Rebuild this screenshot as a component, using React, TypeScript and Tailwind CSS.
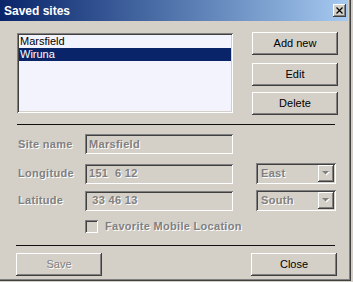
import React from "react";

const raised =
  "bg-[#d4d0c8] shadow-[inset_-1px_-1px_#404040,inset_1px_1px_#ffffff,inset_-2px_-2px_#808080]";
const sunken =
  "shadow-[inset_1px_1px_#808080,inset_-1px_-1px_#ffffff,inset_2px_2px_#404040,inset_-2px_-2px_#d4d0c8]";
const dimText = "text-[#808080] font-bold tracking-[0.3px] [text-shadow:1px_1px_0_#ffffff]";

function Field({ label, value }: { label: string; value: string }) {
  return (
    <div className="flex items-center h-[20px]">
      <span className={`w-[85px] pl-[18px] ${dimText}`}>{label}</span>
      <div className={`w-[148px] h-[20px] bg-[#d4d0c8] ${sunken} flex items-center pl-[4px]`}>
        <span className={`whitespace-pre ${dimText}`}>{value}</span>
      </div>
    </div>
  );
}

function Combo({ value }: { value: string }) {
  return (
    <div className={`ml-[23px] w-[80px] h-[21px] bg-[#d4d0c8] ${sunken} flex items-center p-[2px]`}>
      <span className={`flex-1 pl-[3px] ${dimText}`}>{value}</span>
      <div className={`w-[16px] h-[17px] ${raised} flex items-center justify-center`}>
        <svg width="8" height="5" viewBox="0 0 8 5">
          <path d="M1 1h7L4.5 4.5z" fill="#ffffff" />
          <path d="M0 0h7L3.5 3.5z" fill="#808080" />
        </svg>
      </div>
    </div>
  );
}

function Button({ label, disabled, className = "" }: { label: string; disabled?: boolean; className?: string }) {
  return (
    <div className={`w-[86px] h-[23px] ${raised} flex items-center justify-center ${className}`}>
      <span className={disabled ? "text-[#808080] [text-shadow:1px_1px_0_#ffffff]" : "text-black"}>{label}</span>
    </div>
  );
}

export default function App() {
  return (
    <div className="w-[353px] h-[282px] bg-[#d4d0c8] font-['Liberation_Sans',Arial,sans-serif] text-[11px] leading-none select-none">
      <div className="w-[351px] h-[281px] flex flex-col border-r border-b border-[#404040] shadow-[inset_-1px_-1px_#808080]">
        {/* Title bar */}
        <div className="h-[21px] mr-[2px] flex items-center justify-between bg-gradient-to-r from-[#0a246a] to-[#a6caf0] pl-[4px] pr-[2px]">
          <span className="text-white font-bold text-[12px]">Saved sites</span>
          <div className={`w-[13px] h-[13px] ${raised} flex items-center justify-center`}>
            <svg width="7" height="7" viewBox="0 0 7 7">
              <path d="M0.5 0.5l6 6M6.5 0.5l-6 6" stroke="#000" strokeWidth="1.2" />
            </svg>
          </div>
        </div>

        {/* List + actions */}
        <div className="flex pl-[17px] pt-[11px]">
          <div className={`mt-[1px] w-[216px] h-[80px] bg-[#f3f3fd] ${sunken} p-[2px] flex flex-col`}>
            <div className="h-[13px] flex items-center pl-[1px] text-black">Marsfield</div>
            <div className="h-[13px] flex items-center pl-[1px] text-white bg-[#0a246a]">Wiruna</div>
          </div>
          <div className="ml-[19px] flex flex-col">
            <Button label="Add new" />
            <Button label="Edit" className="mt-[8px]" />
            <Button label="Delete" className="mt-[6px]" />
          </div>
        </div>

        <div className="ml-[17px] mt-[9px] w-[318px] h-[1px] bg-[#101010]" />

        {/* Details */}
        <div className="mt-[9px]">
          <Field label="Site name" value="Marsfield" />
        </div>
        <div className="mt-[9px] flex items-center">
          <Field label="Longitude" value="151  6 12" />
          <Combo value="East" />
        </div>
        <div className="mt-[6px] flex items-center">
          <Field label="Latitude" value=" 33 46 13" />
          <Combo value="South" />
        </div>
        <div className="mt-[9px] ml-[85px] flex items-center">
          <div className={`w-[13px] h-[13px] bg-[#d4d0c8] ${sunken}`} />
          <span className={`ml-[7px] ${dimText}`}>Favorite Mobile Location</span>
        </div>

        <div className="ml-[16px] mt-[12px] w-[319px] h-[1px] bg-[#101010]" />

        <div className="mt-[7px] flex pl-[16px]">
          <Button label="Save" disabled />
          <Button label="Close" className="ml-[149px]" />
        </div>
      </div>
    </div>
  );
}
